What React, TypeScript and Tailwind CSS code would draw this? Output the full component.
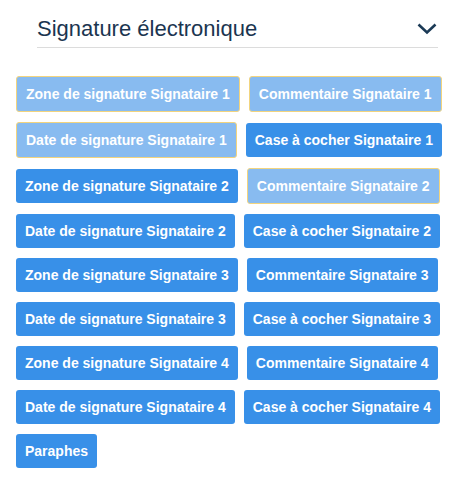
const buttons = [
  { label: "Zone de signature Signataire 1", light: true },
  { label: "Commentaire Signataire 1", light: true },
  { label: "Date de signature Signataire 1", light: true },
  { label: "Case à cocher Signataire 1" },
  { label: "Zone de signature Signataire 2" },
  { label: "Commentaire Signataire 2", light: true },
  { label: "Date de signature Signataire 2" },
  { label: "Case à cocher Signataire 2" },
  { label: "Zone de signature Signataire 3" },
  { label: "Commentaire Signataire 3" },
  { label: "Date de signature Signataire 3" },
  { label: "Case à cocher Signataire 3" },
  { label: "Zone de signature Signataire 4" },
  { label: "Commentaire Signataire 4" },
  { label: "Date de signature Signataire 4" },
  { label: "Case à cocher Signataire 4" },
  { label: "Paraphes" },
];

export default function App() {
  return (
    <div className="w-[458px] h-[487px] bg-white font-['Liberation_Sans',Arial,sans-serif]">
      {/* Header */}
      <div className="ml-[37px] mr-[20px] pt-4">
        <div className="flex items-center justify-between border-b border-[#dcdcdc] pb-[5px]">
          <span className="text-[22px] leading-[26px] text-[#1b3550]">
            Signature électronique
          </span>
          <svg width="20" height="12" viewBox="0 0 20 12" className="mr-[1px]">
            <polyline
              points="1.5,1.5 10,9.5 18.5,1.5"
              fill="none"
              stroke="#1b3a56"
              strokeWidth="2.6"
            />
          </svg>
        </div>
      </div>

      {/* Button list */}
      <div className="flex flex-wrap items-center gap-x-[9px] gap-y-[10px] pl-4 pr-3 mt-[28px]">
        {buttons.map((b) => (
          <button
            key={b.label}
            className={
              b.light
                ? "h-[36px] px-[9px] rounded-[3px] border border-[#f2d47e] bg-[#88bbf0] text-white text-[14px] font-bold"
                : "h-[34px] px-[9px] rounded-[3px] bg-[#3890e8] text-white text-[14px] font-bold"
            }
          >
            {b.label}
          </button>
        ))}
      </div>
    </div>
  );
}
